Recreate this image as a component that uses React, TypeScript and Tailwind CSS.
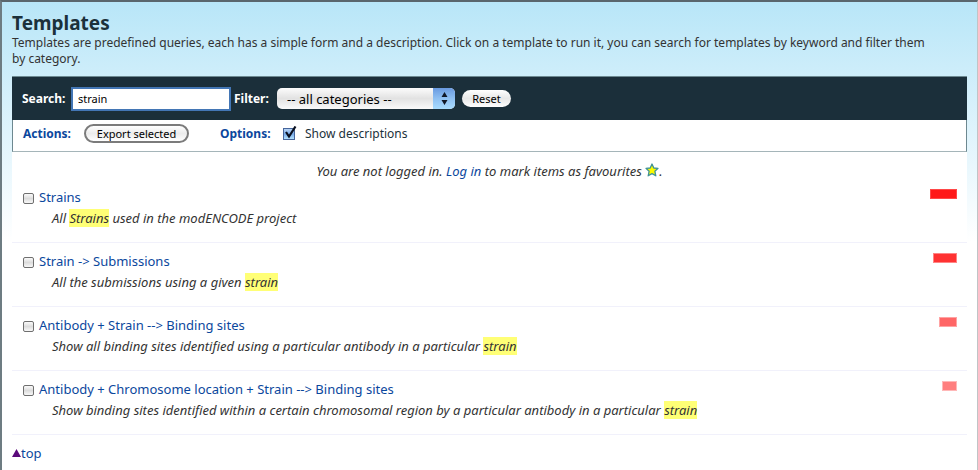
import { useState } from "react";

type Template = {
  title: string;
  before: string;
  match: string;
  after: string;
  bar: string;
};

const templates: Template[] = [
  {
    title: "Strains",
    before: "All ",
    match: "Strains",
    after: " used in the modENCODE project",
    bar: "w-[27px] bg-[#ff1919] border-[#ff4848]",
  },
  {
    title: "Strain -> Submissions",
    before: "All the submissions using a given ",
    match: "strain",
    after: "",
    bar: "w-[24px] bg-[#ff3232] border-[#ff8484]",
  },
  {
    title: "Antibody + Strain --> Binding sites",
    before: "Show all binding sites identified using a particular antibody in a particular ",
    match: "strain",
    after: "",
    bar: "w-[18px] bg-[#ff6666] border-[#ffa3a3]",
  },
  {
    title: "Antibody + Chromosome location + Strain --> Binding sites",
    before:
      "Show binding sites identified within a certain chromosomal region by a particular antibody in a particular ",
    match: "strain",
    after: "",
    bar: "w-[15px] bg-[#ff7f7f] border-[#ffb8b8]",
  },
];

function Tick() {
  return (
    <svg
      className="pointer-events-none absolute -top-[2px] left-0 h-[15px] w-[15px]"
      viewBox="0 0 15 15"
      fill="none"
      aria-hidden="true"
    >
      <path d="M3 6 L6 10.5 L12.5 0.5" stroke="#0a1020" strokeWidth="2.2" />
    </svg>
  );
}

function Star() {
  return (
    <svg className="inline-block h-[14px] w-[14px] align-[-1px]" viewBox="0 0 14 14" aria-hidden="true">
      <path
        d="M7 1 L8.8 5 L13 5.4 L9.9 8.3 L10.8 12.8 L7 10.6 L3.2 12.8 L4.1 8.3 L1 5.4 L5.2 5 Z"
        fill="#fbfb00"
        stroke="#3f9297"
        strokeWidth="1.3"
        strokeLinejoin="round"
      />
    </svg>
  );
}

export default function App() {
  const [query, setQuery] = useState("strain");
  const [show, setShow] = useState(true);

  return (
    <div className="min-h-screen border-t-2 border-r border-l-2 border-t-[#5a666d] border-r-[#c0c4c6] border-l-[#6d7c82] bg-white bg-linear-to-b from-[#b8e6f8] to-white bg-size-[100%_240px] bg-no-repeat px-[10px] pt-[9px] font-['Noto_Sans','Lucida_Grande',sans-serif] text-[13px] leading-[16px] text-[#333]">
      <h1 className="text-[19px] leading-[24px] font-bold text-[#1b313b]">Templates</h1>
      <p className="pr-[30px] text-[12px]">
        Templates are predefined queries, each has a simple form and a description. Click on a template to run it, you
        can search for templates by keyword and filter them by category.
      </p>

      <main className="mt-[9px] bg-white">
        <form
          className="flex h-[44px] items-center border-t border-t-[#6d8a92] bg-[#1b2f3a] px-[10px] text-[12px] font-bold text-white"
          onSubmit={(e) => e.preventDefault()}
        >
          <label htmlFor="search" className="w-[51px]">
            Search:
          </label>
          <input
            id="search"
            type="text"
            value={query}
            onChange={(e) => setQuery(e.target.value)}
            className="h-[20px] w-[156px] bg-white px-[5px] text-[11px] font-normal text-black ring-2 ring-[#4376b5] outline-none"
          />
          <label htmlFor="filter" className="ml-[5px] w-[43px]">
            Filter:
          </label>
          <div className="relative">
            <select
              id="filter"
              className="block h-[21px] w-[178px] appearance-none rounded-[5px] bg-linear-to-b from-[#fcfcfc] via-[#e2e2e2] to-[#fafafa] pr-[24px] pl-[10px] text-[13px] font-normal text-black"
            >
              <option>-- all categories --</option>
            </select>
            <span className="pointer-events-none absolute top-0 right-0 flex h-[21px] w-[22px] items-center justify-center rounded-r-[5px] bg-linear-to-b from-[#6a9ae0] via-[#8fc0f2] to-[#a8dcff]">
              <svg className="h-[13px] w-[7px]" viewBox="0 0 7 13" aria-hidden="true">
                <path d="M3.5 0 L6.5 5 H0.5 Z M3.5 13 L6.5 8 H0.5 Z" fill="#101828" />
              </svg>
            </span>
          </div>
          <button
            type="reset"
            className="ml-[7px] h-[17px] w-[49px] rounded-full bg-linear-to-b from-white via-[#e8e8e8] to-white text-[11px] leading-[16px] font-normal text-black"
          >
            Reset
          </button>
        </form>

        <div className="flex h-[32px] items-center border border-t-0 border-[#6d8890] border-b-[#a5b5b9] px-[10px] pb-[4px] text-[12px]">
          <strong className="w-[61px] text-[#0b479d]">Actions:</strong>
          <button
            type="button"
            className="h-[19px] w-[105px] rounded-full border-2 border-[#7b7b7b] bg-linear-to-b from-white via-[#ececec] to-white text-[11px] leading-[15px] text-black"
          >
            Export selected
          </button>
          <strong className="ml-[31px] w-[63px] text-[#0b479d]">Options:</strong>
          <label className="flex items-center gap-[10px] text-[#1b313b]">
            <span className="relative">
              <input
                type="checkbox"
                checked={show}
                onChange={(e) => setShow(e.target.checked)}
                className="block h-[12px] w-[12px] appearance-none border border-[#46659b] bg-linear-to-b from-[#b8d4f5] via-[#77aae8] to-[#b4e2ff]"
              />
              {show && <Tick />}
            </span>
            Show descriptions
          </label>
        </div>

        <p className="pt-[11px] text-center italic">
          You are not logged in.{" "}
          <a href="#login" className="text-[#0b479d]">
            Log in
          </a>{" "}
          to mark items as favourites <Star />.
        </p>

        <ul>
          {templates.map((t, i) => (
            <li
              key={t.title}
              className="flex h-[64px] items-start border-b border-[#f1f1fb] pt-[8px] pr-[10px] pl-[11px] leading-[21px]"
            >
              <input
                type="checkbox"
                aria-label={t.title}
                className="mt-[6px] h-[11px] w-[11px] shrink-0 appearance-none rounded-[2px] border border-[#6f6f6f] bg-linear-to-b from-[#fafafa] via-[#dcdcdc] to-[#f8f8f8]"
              />
              <div className="ml-[5px] flex-1">
                <a href={`#template-${i}`} className="text-[#0b479d]">
                  {t.title}
                </a>
                {show && (
                  <p className="pl-[13px] italic">
                    {t.before}
                    <mark className="bg-[#ffff76] text-inherit">{t.match}</mark>
                    {t.after}
                  </p>
                )}
              </div>
              <span className={`mt-[2px] block h-[10px] border ${t.bar}`} />
            </li>
          ))}
        </ul>
      </main>

      <a href="#top" className="mt-[10px] inline-flex items-center text-[#0b479d]">
        <svg className="h-[8px] w-[9px]" viewBox="0 0 9 8" aria-hidden="true">
          <path d="M4.5 0 L9 8 H0 Z" fill="#5b0a7b" />
        </svg>
        top
      </a>
    </div>
  );
}
